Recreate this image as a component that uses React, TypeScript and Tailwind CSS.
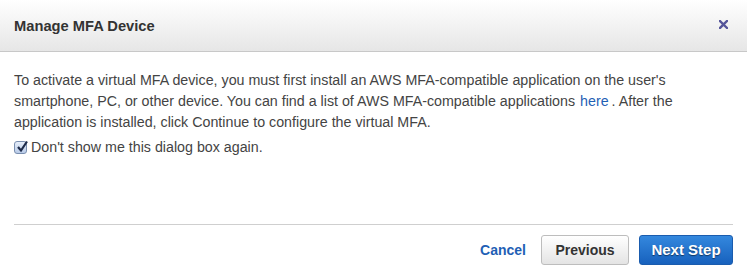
const CloseIcon = () => (
  <svg width="9" height="9" viewBox="0 0 9 9" aria-hidden>
    <path d="M1 1 L8 8 M8 1 L1 8" stroke="#55559a" strokeWidth="2.4" strokeLinecap="square" />
  </svg>
);

const CheckBox = () => (
  <span className="relative inline-block w-[13px] h-[13px] rounded-[3px] border border-[#7a8fb0] bg-gradient-to-b from-[#e6eefa] to-[#b9cbe8] mr-[4px] shrink-0">
    <svg className="absolute left-[1px] top-[-2px]" width="12" height="13" viewBox="0 0 12 13">
      <path d="M2 7 L5 10.5 L11 1.5" fill="none" stroke="#1d2b4a" strokeWidth="2.2" />
    </svg>
  </span>
);

export default function App() {
  return (
    <div className="w-[747px] h-[273px] bg-white font-['Liberation_Sans',Arial,sans-serif] text-[#333]">
      <div className="h-[52px] flex items-center justify-between px-[14px] bg-gradient-to-b from-white to-[#e6e6e6] border-b border-[#c8c8c8]">
        <h1 className="text-[14.7px] font-bold text-[#333] pt-[1px]">Manage MFA Device</h1>
        <button className="mr-[5px] mt-[-3px]">
          <CloseIcon />
        </button>
      </div>

      <div className="px-[14px] pt-[18px]">
        <p className="text-[14.25px] leading-[21px] text-[#444]">
          To activate a virtual MFA device, you must first install an AWS MFA-compatible application on the user's
          <br />
          smartphone, PC, or other device. You can find a list of AWS MFA-compatible applications{" "}
          <a className="text-[#1f5fb5] pl-[1px] pr-[3px]">here</a>. After the
          <br />
          application is installed, click Continue to configure the virtual MFA.
        </p>
        <label className="flex items-center mt-[4px] text-[14.25px] leading-[21px] text-[#444]">
          <CheckBox />
          Don't show me this dialog box again.
        </label>

        <div className="mt-[66px] border-t border-[#cfcfcf]" />

        <div className="flex items-center justify-end mt-[10px] gap-[10px]">
          <button className="text-[14px] font-bold text-[#1f5fb5] mr-[5px]">Cancel</button>
          <button className="w-[88px] h-[30px] rounded-[3px] border border-[#bdbdbd] bg-gradient-to-b from-white to-[#e4e4e4] text-[14px] font-bold text-[#333]">
            Previous
          </button>
          <button className="w-[94px] h-[30px] rounded-[3px] border border-[#1a5cae] bg-gradient-to-b from-[#3488de] to-[#1761bd] text-[15px] font-bold text-white [text-shadow:0_1px_1px_rgba(0,0,0,0.5)]">
            Next Step
          </button>
        </div>
      </div>
    </div>
  );
}
